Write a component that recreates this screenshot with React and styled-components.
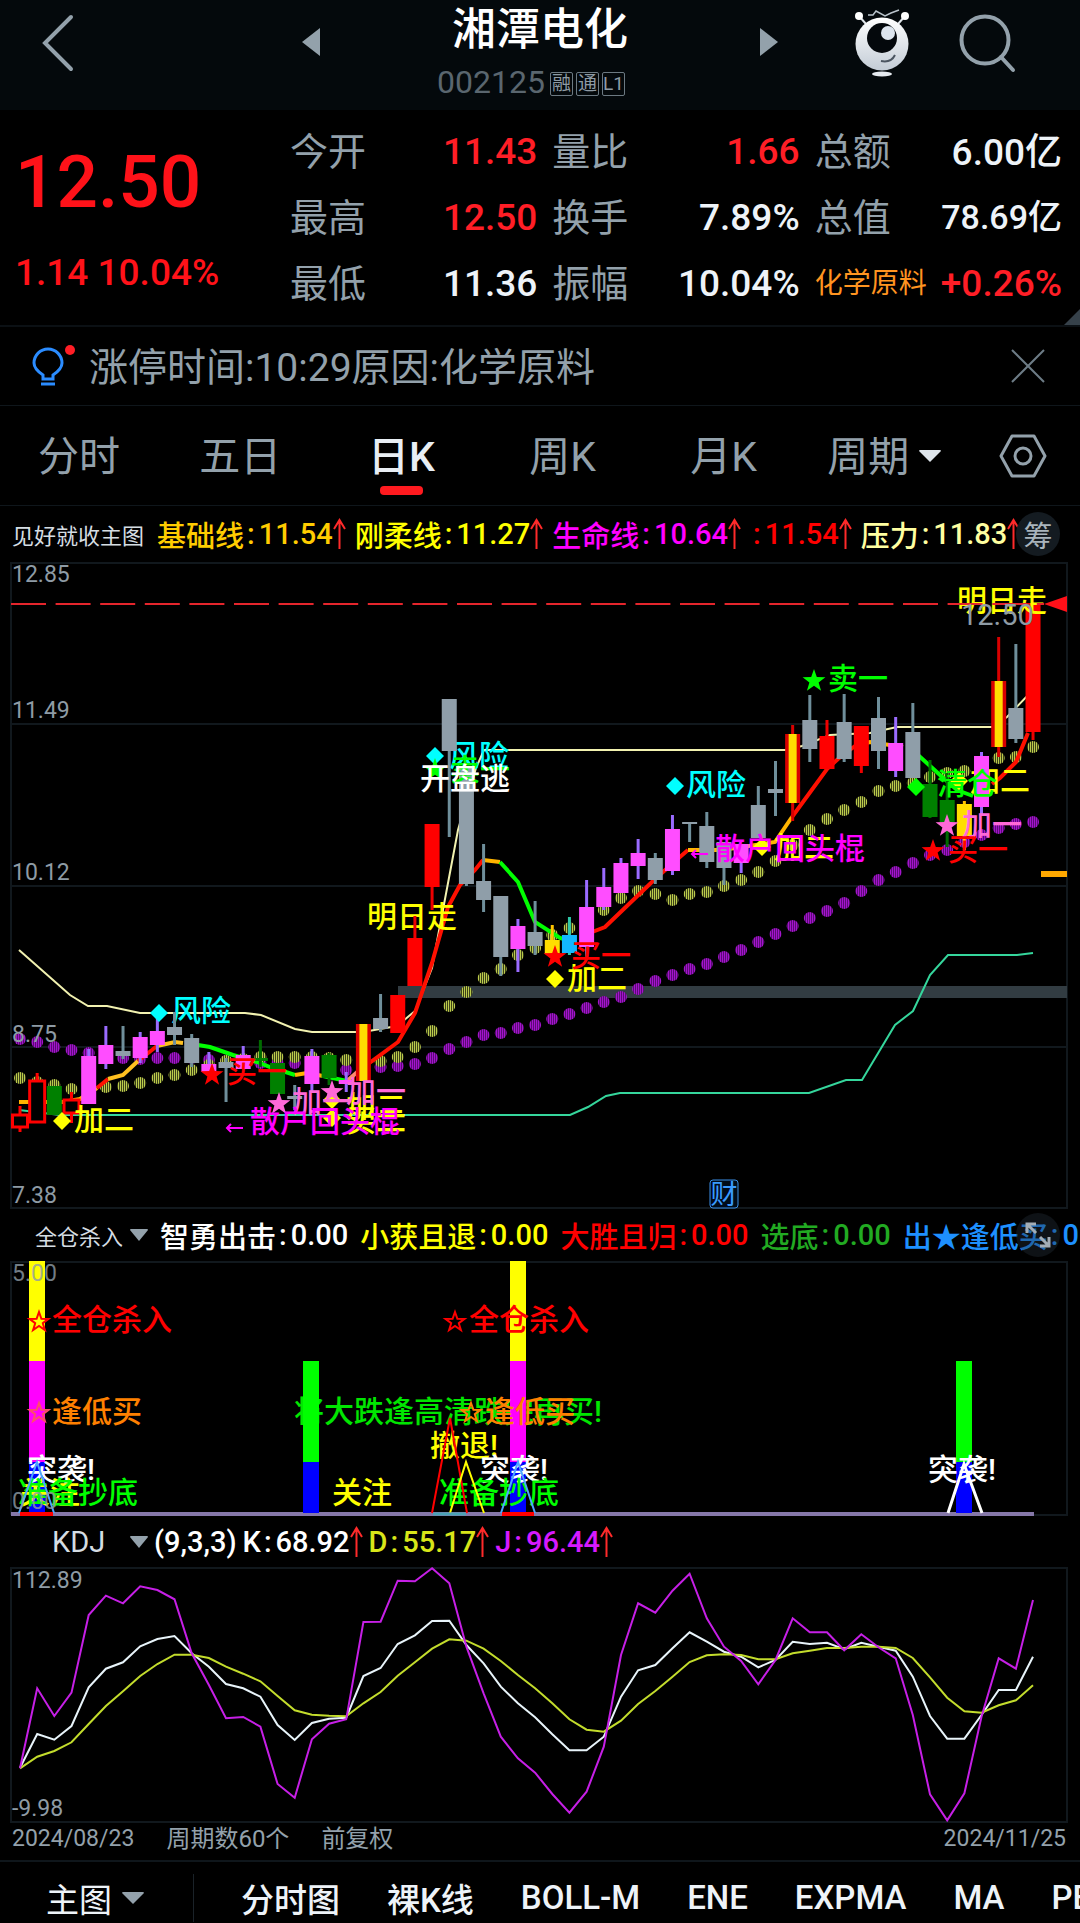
import { useState } from 'react';
import styled, { createGlobalStyle } from 'styled-components';

// 60 trading days share the same x axis in all three charts
const dayX = (i) => 20 + i * 17.17;
const toPoints = (ys, scale = (y) => y) => ys.map((y, i) => `${dayX(i).toFixed(1)},${scale(y).toFixed(1)}`).join(' ');

const COLORS = {
    gray : { body : '#8f9ea9', wick : '#6f8f9b' },
    magenta : { body : '#ff4dff', wick : '#9a6bff' },
    red : { body : '#ff0000', wick : '#ee0000' },
    hollow : { body : '#000', wick : '#ff0000' },
    mixed : { body : '#d90000', wick : '#d90000' },
    green : { body : '#008000', wick : '#006b00' },
    yellow : { body : '#ffdd00', wick : '#ffc400' },
    cyan : { body : '#12b8ff', wick : '#2fc8a8' },
};

// [kind, body top, body bottom, wick top, wick bottom]
const CANDLES = [
    ['hollow', 1115, 1127, 1106, 1132], ['hollow', 1081, 1122, 1073, 1122], ['green', 1086, 1115, 1086, 1115],
    ['hollow', 1100, 1113, 1092, 1123], ['magenta', 1056, 1104, 1049, 1104], ['magenta', 1045, 1064, 1026, 1069],
    ['gray', 1051, 1056, 1026, 1059], ['magenta', 1037, 1058, 1032, 1063], ['magenta', 1031, 1045, 1013, 1052],
    ['gray', 1027, 1035, 1012, 1045], ['gray', 1038, 1063, 1034, 1067], ['magenta', 1064, 1072, 1052, 1072],
    ['gray', 1062, 1068, 1058, 1102], ['magenta', 1055, 1069, 1046, 1069], ['green', 1058, 1061, 1040, 1067],
    ['green', 1063, 1094, 1063, 1094], ['gray', 1096, 1099, 1085, 1110], ['magenta', 1056, 1084, 1049, 1092],
    ['green', 1055, 1078, 1053, 1085], ['magenta', 1080, 1084, 1072, 1092], ['mixed', 1024, 1081, 1024, 1081],
    ['gray', 1018, 1029, 994, 1032], ['red', 995, 1033, 995, 1033], ['red', 938, 986, 916, 986],
    ['red', 824, 887, 824, 910], ['gray', 699, 751, 699, 837], ['gray', 767, 884, 767, 886],
    ['gray', 881, 900, 844, 912], ['gray', 896, 957, 896, 976], ['magenta', 926, 949, 919, 972],
    ['gray', 932, 946, 901, 955], ['yellow', 940, 954, 925, 954], ['cyan', 935, 953, 917, 955],
    ['magenta', 907, 947, 880, 957], ['magenta', 887, 907, 868, 910], ['magenta', 863, 893, 858, 893],
    ['magenta', 853, 866, 839, 879], ['gray', 858, 880, 853, 884], ['magenta', 829, 871, 815, 875],
    ['gray', 822, 824, 822, 842], ['gray', 826, 862, 812, 868], ['gray', 842, 868, 842, 885],
    ['magenta', 844, 863, 844, 873], ['gray', 805, 838, 786, 838], ['gray', 789, 793, 761, 816],
    ['mixed', 734, 803, 725, 821], ['gray', 720, 749, 695, 762], ['red', 736, 769, 720, 769],
    ['gray', 722, 759, 694, 762], ['red', 726, 766, 726, 773], ['gray', 718, 751, 697, 769],
    ['magenta', 743, 771, 717, 777], ['gray', 732, 778, 703, 778], ['green', 784, 817, 760, 818],
    ['green', 800, 822, 773, 847], ['yellow', 804, 836, 801, 850], ['magenta', 756, 807, 752, 815],
    ['mixed', 681, 747, 637, 757], ['gray', 708, 739, 644, 743], ['red', 603, 732, 603, 740],
];

const OLIVE_DOTS = [
    1078, 1082, 1085, 1089, 1088, 1087, 1086, 1083, 1078, 1075, 1070, 1065, 1061, 1059, 1057, 1057, 1057, 1057, 1058, 1060,
    1061, 1061, 1057, 1047, 1031, 1006, 992, 978, 969, 955, 948, 935, 928, 920, 910, 898, 891, 894, 900, 894,
    892, 886, 880, 872, 861, 845, 830, 819, 810, 802, 791, 786, 783, 777, 773, 771, 766, 758, 757, 747,
];

const PURPLE_DOTS = [
    1039, 1042, 1047, 1050, 1053, 1055, 1058, 1059, 1058, 1058, 1058, 1060, 1061, 1062, 1063, 1063, 1063, 1064, 1067, 1070,
    1068, 1067, 1066, 1064, 1058, 1049, 1042, 1035, 1033, 1028, 1025, 1019, 1014, 1008, 1002, 997, 989, 981, 975, 969,
    964, 957, 950, 942, 934, 926, 918, 911, 903, 891, 880, 872, 863, 855, 850, 842, 835, 828, 824, 822,
];

const LIFE_LINE = [
    ['#ffb400', '19,1102 63,1102 80,1099 97,1088'],
    ['#ff1000', '97,1088 108,1079'],
    ['#ffc020', '108,1079 123,1075 138,1061'],
    ['#ff1000', '138,1061 157,1046'],
    ['#ffc020', '157,1046 175,1042 183,1043'],
    ['#00ff00', '198,1045 210,1047 233,1055 257,1062 270,1067 295,1075'],
    ['#ffb400', '295,1075 307,1073 323,1076'],
    ['#00ff00', '323,1076 347,1081'],
    ['#ff8a70', '347,1081 363,1067'],
    ['#ff1000', '363,1067 372,1061 398,1042 415,1013 432,963 448,907 460,885 475,870 483,860'],
    ['#ffb400', '483,860 500,862'],
    ['#00ff00', '500,862 518,882 535,922 560,938 570,941'],
    ['#ff1000', '587,934 605,927 653,881 673,863 688,850'],
    ['#ffb400', '688,850 722,850 775,842 792,817'],
    ['#ff1000', '792,817 827,769 838,759 855,746'],
    ['#ffb400', '855,746 870,742 903,747'],
    ['#00ff00', '918,755 940,775 957,790 973,796'],
    ['#ff1000', '992,784 1000,778 1016,762 1028,733'],
];

const PRESSURE_LINE = '19,950 70,995 88,1006 107,1006 140,1013 245,1013 261,1015 295,1029 312,1032 363,1032 397,1026 415,1011 432,968 458,830 476,768 484,750 785,750 802,746 830,735 870,733 897,727 992,727 1007,717 1033,690';
const SUPPORT_LINE = '19,1110 60,1115 570,1115 588,1107 606,1096 620,1093 809,1093 846,1080 862,1080 895,1025 913,1011 930,975 948,955 1017,955 1033,953';

const J_LINE = [
    655, 415, 498, 428, 195, 137, 160, 109, 120, 148, 310, 405, 505, 501, 530, 702, 743, 568, 521, 508,
    216, 215, 92, 94, 55, 100, 290, 430, 560, 625, 668, 732, 788, 725, 590, 315, 160, 188, 122, 71,
    205, 290, 333, 403, 330, 205, 247, 247, 301, 253, 292, 325, 495, 733, 811, 730, 500, 325, 356, 150,
];
const K_LINE = [
    653, 552, 569, 528, 412, 356, 337, 289, 267, 258, 310, 350, 402, 415, 440, 525, 570, 519, 506, 503,
    378, 354, 282, 256, 213, 212, 285, 340, 410, 460, 502, 553, 601, 601, 560, 440, 361, 345, 295, 247,
    275, 305, 320, 352, 330, 275, 282, 278, 298, 278, 290, 302, 380, 498, 566, 566, 495, 420, 420, 320,
];
const D_LINE = [
    655, 620, 603, 577, 522, 468, 424, 378, 342, 314, 314, 324, 350, 371, 394, 438, 481, 494, 497, 499,
    460, 426, 377, 337, 296, 268, 272, 296, 333, 375, 415, 460, 508, 539, 545, 512, 462, 423, 380, 336,
    316, 313, 315, 328, 328, 310, 302, 294, 294, 290, 290, 294, 324, 382, 443, 484, 488, 466, 451, 406,
];
const kdjY = (v) => 1550 + v / 3;

const STATS = [
    [
        { label : '今开', value : '11.43', color : '#ff1e26' },
        { label : '最高', value : '12.50', color : '#ff1e26' },
        { label : '最低', value : '11.36' },
    ],
    [
        { label : '量比', value : '1.66', color : '#ff1e26' },
        { label : '换手', value : '7.89%' },
        { label : '振幅', value : '10.04%' },
    ],
    [
        { label : '总额', value : '6.00亿', unit : true },
        { label : '总值', value : '78.69亿', unit : true, small : true },
        { label : '化学原料', value : '+0.26%', color : '#ff1e26', sector : true },
    ],
];

const TABS = ['分时', '五日', '日K', '周K', '月K'];
const INDICATORS = ['分时图', '裸K线', 'BOLL-M', 'ENE', 'EXPMA', 'MA', 'PE'];

const MAIN_LEGEND = [
    { name : '基础线', value : '11.54', color : '#ffcc00', up : true },
    { name : '刚柔线', value : '11.27', color : '#ffff00', up : true },
    { name : '生命线', value : '10.64', color : '#ff00ff', up : true },
    { name : '', value : '11.54', color : '#ff0000', up : true },
    { name : '压力', value : '11.83', color : '#ffffa0', up : true },
];

const SIGNAL_LEGEND = [
    { name : '智勇出击', value : '0.00', color : '#ffffff' },
    { name : '小获且退', value : '0.00', color : '#ffff00' },
    { name : '大胜且归', value : '0.00', color : '#ff0000' },
    { name : '选底', value : '0.00', color : '#22aa22' },
    { name : '出★逢低买', value : '0.00', color : '#1e90ff' },
];

const KDJ_LEGEND = [
    { name : 'K', value : '68.92', color : '#ffffff', up : true },
    { name : 'D', value : '55.17', color : '#d8e619', up : true },
    { name : 'J', value : '96.44', color : '#d61aff', up : true },
];

function starPoints(cx, cy, r){
    let points = [];
    for (let i = 0; i < 10; i++){
        const radius = i % 2 === 0 ? r : r * 0.4;
        const angle = Math.PI * i / 5 - Math.PI / 2;
        points.push(`${(cx + radius * Math.cos(angle)).toFixed(1)},${(cy + radius * Math.sin(angle)).toFixed(1)}`);
    }
    return points.join(' ');
}

function Star({ x, y, color, outline }){
    return <polygon points={ starPoints(x, y, outline ? 10 : 12) } fill={ outline ? 'none' : color } stroke={ outline ? color : 'none' } strokeWidth='2' />
}

function Diamond({ x, y, color }){
    return <polygon points={ `${x - 9},${y} ${x},${y - 9} ${x + 9},${y} ${x},${y + 9}` } fill={ color } />
}

function Candle({ index, data }){
    const [kind, top, bottom, high, low] = data;
    const x = dayX(index);
    const color = COLORS[kind];
    return (
        <g>
            <line x1={ x } x2={ x } y1={ high } y2={ low } stroke={ color.wick } strokeWidth='3' />
            <rect
                x={ x - 7.5 } y={ top } width='15' height={ bottom - top } fill={ color.body }
                stroke={ kind === 'hollow' ? '#ff0000' : 'none' } strokeWidth='3'
            />
            { kind === 'mixed' && <rect x={ x - 4 } y={ top } width='8' height={ bottom - top } fill='#ffdd00' /> }
        </g>
    )
}

function LegendItem({ item }){
    return (
        <LegendEntry $color={ item.color }>
            { item.name }<Colon>:</Colon>{ item.value }
            {
                item.up
                ? (
                    <svg width='13' height='32' viewBox='0 0 13 32' fill='none' stroke='#ff2a2a' strokeWidth='2'>
                        <path d='M6.5 31V2M1 11L6.5 2L12 11' />
                    </svg>
                )
                : null
            }
        </LegendEntry>
    )
}

function PriceChart(){
    return (
        <Chart viewBox='0 562 1080 648' role='img' aria-label='日K'>
            <defs>
                <pattern id='oliveStripes' width='2' height='2' patternUnits='userSpaceOnUse'>
                    <rect width='2' height='2' fill='#3c4218' />
                    <rect width='1' height='2' fill='#bccb4c' />
                </pattern>
                <pattern id='purpleStripes' width='2' height='2' patternUnits='userSpaceOnUse'>
                    <rect width='2' height='2' fill='#5c0a78' />
                    <rect width='1' height='2' fill='#a414cc' />
                </pattern>
            </defs>

            <g stroke='#11181d' strokeWidth='2' fill='none'>
                <rect x='11' y='563' width='1056' height='645' />
                <path d='M11 724H1067M11 886H1067M11 1047H1067' />
            </g>
            <rect x='398' y='986' width='669' height='12' fill='#323c42' />

            { PURPLE_DOTS.map((y, i) => <circle key={i} cx={ dayX(i) } cy={ y } r='6' fill='url(#purpleStripes)' />) }
            { OLIVE_DOTS.map((y, i) => <circle key={i} cx={ dayX(i) } cy={ y } r='6' fill='url(#oliveStripes)' />) }

            <polyline points={ PRESSURE_LINE } fill='none' stroke='#f2f2b0' strokeWidth='2' />
            <polyline points={ SUPPORT_LINE } fill='none' stroke='#35d69c' strokeWidth='2' />
            { LIFE_LINE.map(([color, points], i) => <polyline key={i} points={ points } fill='none' stroke={ color } strokeWidth='4' />) }

            <SignalText fill='#ffff00'>
                <text x='367' y='927'>明日走</text>
                <Diamond x={ 762 } y={ 847 } color='#ffff00' />
                <text x='774' y='858'>加二</text>
                <text x='970' y='791'>加二</text>
            </SignalText>
            <SignalText fill='#00ffff'>
                <text x='171' y='1021'>风险</text>
                <text x='449' y='766'>风险</text>
                <text x='686' y='795'>风险</text>
            </SignalText>

            { CANDLES.map((data, i) => <Candle key={i} index={ i } data={ data } />) }

            <SignalText fill='#ffff00'>
                <Diamond x={ 332 } y={ 1100 } color='#ffff00' />
                <text x='346' y='1117'>加二</text>
                <Diamond x={ 332 } y={ 1118 } color='#ffff00' />
                <text x='346' y='1131'>买二</text>
                <Diamond x={ 62 } y={ 1121 } color='#ffff00' />
                <text x='74' y='1130'>加二</text>
                <Diamond x={ 555 } y={ 979 } color='#ffff00' />
                <text x='567' y='989'>加二</text>
                <Diamond x={ 959 } y={ 781 } color='#ffff00' />
                <text x='957' y='611'>明日走</text>
            </SignalText>
            <Diamond x={ 159 } y={ 1013 } color='#00ffff' />
            <Diamond x={ 435 } y={ 756 } color='#00ffff' />
            <Diamond x={ 675 } y={ 786 } color='#00ffff' />
            <SignalText fill='#00ff00'>
                <Star x={ 435 } y={ 770 } color='#00ff00' />
                <text x='450' y='780'>卖一</text>
                <Star x={ 814 } y={ 681 } color='#00ff00' />
                <text x='828' y='689'>卖一</text>
                <Diamond x={ 916 } y={ 787 } color='#00ff00' />
                <text x='937' y='794'>清仓</text>
            </SignalText>
            <SignalText fill='#ff69d8'>
                <Star x={ 279 } y={ 1104 } color='#ff69d8' />
                <text x='292' y='1112'>加一</text>
                <Star x={ 332 } y={ 1092 } color='#ff69d8' />
                <text x='346' y='1102'>加一</text>
                <Star x={ 947 } y={ 826 } color='#ff69d8' />
                <text x='962' y='835'>加一</text>
            </SignalText>
            <SignalText fill='#ff0000'>
                <Star x={ 212 } y={ 1075 } color='#ff0000' />
                <text x='227' y='1082'>买一</text>
                <Star x={ 555 } y={ 957 } color='#ff0000' />
                <text x='571' y='966'>买一</text>
                <Star x={ 933 } y={ 851 } color='#ff0000' />
                <text x='948' y='860'>买一</text>
            </SignalText>
            <SignalText fill='#ff00ff'>
                <path d='M243 1128H227M231 1124L227 1128L231 1132' stroke='#ff00ff' strokeWidth='2' fill='none' />
                <text x='250' y='1132'>散户回头棍</text>
                <path d='M708 854H692M696 850L692 854L696 858' stroke='#ff00ff' strokeWidth='2' fill='none' />
                <text x='715' y='859'>散户回头棍</text>
            </SignalText>
            <SignalText fill='#ffffff'>
                <text x='420' y='789'>开盘逃</text>
            </SignalText>

            <line x1='11' x2='1044' y1='604' y2='604' stroke='#e5252c' strokeWidth='2' strokeDasharray='35 9.6' />
            <polygon points='1044,604 1067,596 1067,612' fill='#ff1019' />
            <rect x='1041' y='871' width='26' height='6' fill='#ffa800' />

            <AxisText>
                <text x='12' y='582'>12.85</text>
                <text x='12' y='718'>11.49</text>
                <text x='12' y='880'>10.12</text>
                <text x='12' y='1042'>8.75</text>
                <text x='12' y='1203'>7.38</text>
            </AxisText>
            <PriceTag x='961' y='625'>12.50</PriceTag>

            <rect x='710' y='1180' width='28' height='28' rx='3' fill='#000c1a' stroke='#3a8fe6' strokeWidth='1' />
            <ReportMark x='724' y='1204'>财</ReportMark>
        </Chart>
    )
}

function SignalChart(){
    return (
        <Chart viewBox='0 1260 1080 257' role='img' aria-label='全仓杀入'>
            <path d='M11 1515V1262H1067V1515H11' stroke='#11181d' strokeWidth='2' fill='none' />

            <SignalText fill='#00e600'>
                <text x='294' y='1422'>将大跌逢高清跌完再买!</text>
            </SignalText>

            <path d='M11 1514H1034' stroke='#8577a8' strokeWidth='4' />
            {
                [29, 510].map((x)=>{
                    return (
                        <g key={x}>
                            <rect x={ x } y='1261' width='16' height='100' fill='#ffff00' />
                            <rect x={ x } y='1361' width='16' height='101' fill='#ff00ff' />
                            <rect x={ x } y='1462' width='16' height='51' fill='#0000ff' />
                        </g>
                    )
                })
            }
            {
                [303, 956].map((x)=>{
                    return (
                        <g key={x}>
                            <rect x={ x } y='1361' width='16' height='101' fill='#00ff00' />
                            <rect x={ x } y='1462' width='16' height='51' fill='#0000ff' />
                        </g>
                    )
                })
            }

            <SignalText fill='#ffff00'>
                <text x='20' y='1503'>关注</text>
                <text x='332' y='1503'>关注</text>
                <text x='430' y='1456'>撤退!</text>
            </SignalText>
            <SignalText fill='#ff0000'>
                <Star x={ 39 } y={ 1322 } color='#ff0000' outline />
                <text x='52' y='1330'>全仓杀入</text>
                <Star x={ 455 } y={ 1322 } color='#ff0000' outline />
                <text x='469' y='1330'>全仓杀入</text>
            </SignalText>
            <SignalText fill='#ff8000'>
                <Star x={ 39 } y={ 1413 } color='#ff4d6a' outline />
                <text x='52' y='1422'>逢低买</text>
                <Star x={ 471 } y={ 1413 } color='#ff8000' outline />
                <text x='485' y='1422'>逢低买</text>
            </SignalText>
            <SignalText fill='#ffffff'>
                <text x='27' y='1480'>突袭!</text>
                <text x='480' y='1480'>突袭!</text>
                <text x='928' y='1480'>突袭!</text>
            </SignalText>
            <SignalText fill='#00ff00'>
                <text x='18' y='1503'>准备抄底</text>
                <text x='439' y='1503'>准备抄底</text>
            </SignalText>

            <g fill='none' strokeWidth='2'>
                <path d='M432 1513L450 1418L467 1513' stroke='#ff0000' />
                <path d='M450 1513L466 1462L484 1513' stroke='#ffff00' />
                <path d='M19 1513L37 1462L54 1513M501 1513L518 1462L535 1513' stroke='#4da6ff' />
                <path d='M948 1513L964 1464L982 1513' stroke='#ffffff' strokeWidth='3' />
                <path d='M20 1514H53M502 1514H534' stroke='#ff0000' strokeWidth='4' />
                <path d='M433 1514H466' stroke='#4aa3b5' strokeWidth='3' />
            </g>

            <AxisText opacity='0.8'>
                <text x='12' y='1281'>5.00</text>
                <text x='12' y='1509'>0.00</text>
            </AxisText>
        </Chart>
    )
}

function KdjChart(){
    return (
        <Chart viewBox='0 1567 1080 256' role='img' aria-label='KDJ'>
            <rect x='11' y='1568' width='1056' height='254' stroke='#11181d' strokeWidth='2' fill='none' />
            <AxisText>
                <text x='12' y='1588'>112.89</text>
                <text x='12' y='1816'>-9.98</text>
            </AxisText>
            <g fill='none' strokeWidth='2'>
                <polyline points={ toPoints(K_LINE, kdjY) } stroke='#e8f4fa' />
                <polyline points={ toPoints(D_LINE, kdjY) } stroke='#c3dc2c' />
                <polyline points={ toPoints(J_LINE, kdjY) } stroke='#c61fe6' />
            </g>
        </Chart>
    )
}

function Caret({ width = 18 }){
    return <svg width={ width } height='12' viewBox='0 0 18 12' preserveAspectRatio='none'><path d='M0 1Q0 0 1 0H17Q18 0 18 1L9 12Z' fill='currentColor' /></svg>
}

function App(){

    const [tab, setTab] = useState('日K');
    const [noticeOpen, setNoticeOpen] = useState(true);

    return(
        <Page>
            <GlobalStyle />

            <Header>
                <IconBtn aria-label='返回'>
                    <svg width='32' height='60' viewBox='0 0 32 60' fill='none' stroke='#93a1ab' strokeWidth='4' strokeLinecap='round'>
                        <path d='M29 5L3 31L29 57' />
                    </svg>
                </IconBtn>
                <TitleArea>
                    <IconBtn aria-label='上一只'>
                        <svg width='18' height='28' viewBox='0 0 18 28'><path d='M18 0V28L0 14Z' fill='#93a1ab' /></svg>
                    </IconBtn>
                    <TitleBlock>
                        <StockName>湘潭电化</StockName>
                        <CodeRow>
                            <Code>002125</Code>
                            <Badge>融</Badge>
                            <Badge>通</Badge>
                            <Badge>L1</Badge>
                        </CodeRow>
                    </TitleBlock>
                    <IconBtn aria-label='下一只'>
                        <svg width='18' height='28' viewBox='0 0 18 28'><path d='M0 0V28L18 14Z' fill='#93a1ab' /></svg>
                    </IconBtn>
                </TitleArea>
                <HeaderTools>
                    <IconBtn aria-label='助手'>
                        <svg width='54' height='70' viewBox='0 0 54 70'>
                            <defs>
                                <linearGradient id='robot' x1='0' y1='0' x2='0' y2='1'>
                                    <stop offset='0' stopColor='#ffffff' />
                                    <stop offset='1' stopColor='#c3ccd6' />
                                </linearGradient>
                            </defs>
                            <path d='M4 7L11 15M50 7L43 15' stroke='#dfe5ea' strokeWidth='2' />
                            <circle cx='4' cy='7' r='4' fill='#fff' />
                            <circle cx='50' cy='7' r='4' fill='#fff' />
                            <path d='M13 6H18L21 2L30 7L36 4L44 1' stroke='#b9c3cb' strokeWidth='1.5' fill='none' />
                            <circle cx='27' cy='35' r='26.5' fill='url(#robot)' />
                            <circle cx='27' cy='29' r='15' fill='#04080c' />
                            <circle cx='33' cy='24' r='7' fill='#dde5ee' />
                            <path d='M26 52Q36 54 40 46' stroke='#4b5561' strokeWidth='2' fill='none' />
                            <ellipse cx='27' cy='65' rx='10' ry='2.5' fill='#e6ebf0' />
                        </svg>
                    </IconBtn>
                    <IconBtn aria-label='搜索'>
                        <svg width='58' height='60' viewBox='0 0 58 60' fill='none' stroke='#93a1ab' strokeWidth='4' strokeLinecap='round'>
                            <circle cx='26' cy='26' r='23.5' />
                            <path d='M42 43L54 56' />
                        </svg>
                    </IconBtn>
                </HeaderTools>
            </Header>

            <Quote>
                <PriceBlock>
                    <Price>12.50</Price>
                    <Change>1.14 10.04%</Change>
                </PriceBlock>
                {
                    STATS.map((column, i)=>{
                        return (
                            <StatColumn key={i}>
                                {
                                    column.map((stat)=>{
                                        return (
                                            <Stat key={stat.label}>
                                                <StatLabel $sector={ stat.sector }>{ stat.label }</StatLabel>
                                                <StatValue $color={ stat.color } $unit={ stat.unit } $small={ stat.small }>{ stat.value }</StatValue>
                                            </Stat>
                                        )
                                    })
                                }
                            </StatColumn>
                        )
                    })
                }
                <Corner />
            </Quote>

            {
                noticeOpen && (
                    <Notice>
                        <svg width='48' height='46' viewBox='0 0 48 46' fill='none' stroke='#2b8cff' strokeWidth='3'>
                            <path d='M12 36V32C6 28 3 24 3 20A14 14 0 0 1 31 20C31 24 28 28 22 32V36Z' />
                            <path d='M10 41H24' />
                            <circle cx='39' cy='7' r='5' fill='#ff1e26' stroke='none' />
                        </svg>
                        <NoticeText>涨停时间:10:29原因:化学原料</NoticeText>
                        <IconBtn aria-label='关闭' onClick={ () => setNoticeOpen(false) }>
                            <svg width='34' height='34' viewBox='0 0 34 34' stroke='#6d7c86' strokeWidth='2'>
                                <path d='M1 1L33 33M33 1L1 33' />
                            </svg>
                        </IconBtn>
                    </Notice>
                )
            }

            <Tabs>
                { TABS.map((name) => <Tab key={name} $active={ name === tab } onClick={ () => setTab(name) }>{ name }</Tab>) }
                <Tab>周期<CaretLight><Caret width={ 22 } /></CaretLight></Tab>
                <SettingsBtn aria-label='设置'>
                    <svg width='48' height='44' viewBox='0 0 48 44' fill='none' stroke='#93a1ab' strokeWidth='3'>
                        <path d='M13 2H35L46 22L35 42H13L2 22Z' strokeLinejoin='round' />
                        <circle cx='24' cy='22' r='8' />
                    </svg>
                </SettingsBtn>
            </Tabs>

            <Legend $height={ 56 } $gap={ 9 }>
                <LegendTitle $pad={ 12 }>见好就收主图</LegendTitle>
                { MAIN_LEGEND.map((item, i) => <LegendItem key={i} item={ item } />) }
                <RoundBtn>筹</RoundBtn>
            </Legend>
            <PriceChart />

            <Legend $height={ 50 } $gap={ 12 }>
                <LegendTitle $pad={ 35 }>全仓杀入<Caret /></LegendTitle>
                { SIGNAL_LEGEND.map((item, i) => <LegendItem key={i} item={ item } />) }
                <RoundBtn $clear aria-label='全屏'>
                    <svg width='26' height='26' viewBox='0 0 26 26' fill='none' stroke='#a3adb5' strokeWidth='3'>
                        <path d='M2 11V2H11M2 2L11 11M24 15V24H15M24 24L15 15' />
                    </svg>
                </RoundBtn>
            </Legend>
            <SignalChart />

            <Legend $height={ 50 } $gap={ 6 }>
                <LegendTitle $pad={ 52 } $large>KDJ<Caret /></LegendTitle>
                <LegendEntry $color='#ffffff'>(9,3,3)</LegendEntry>
                { KDJ_LEGEND.map((item, i) => <LegendItem key={i} item={ item } />) }
            </Legend>
            <KdjChart />

            <DateRow>
                <span>2024/08/23</span>
                <DateNote>周期数60个</DateNote>
                <DateNote>前复权</DateNote>
                <LastDate>2024/11/25</LastDate>
            </DateRow>

            <BottomBar>
                <MainSelect>主图<Caret width={ 22 } /></MainSelect>
                { INDICATORS.map((name) => <IndicatorBtn key={name}>{ name }</IndicatorBtn>) }
            </BottomBar>
        </Page>
    )
}

export default App

const GlobalStyle = createGlobalStyle`
    body {
        margin : 0;
        background-color : #000;
        font-family : Roboto, "Noto Sans CJK SC", sans-serif;
    }
    button {
        padding : 0;
        border : none;
        background : none;
        color : inherit;
        font : inherit;
        white-space : nowrap;
    }
    svg {
        flex-shrink : 0;
    }
`

const Page = styled.div`
    width : 100%;
    overflow : hidden;
    background-color : #000;
    color : #93a1ab;
`

const Header = styled.header`
    display : grid;
    grid-template-columns : 1fr 476px 1fr;
    height : 110px;
    background-color : #04090c;

    > button {
        justify-self : start;
        align-self : start;
        margin : 12px 0 0 42px;
    }
`

const IconBtn = styled.button`
    display : flex;
`

const TitleArea = styled.div`
    display : flex;
    justify-content : space-between;

    > button {
        align-self : flex-start;
        margin-top : 28px;
    }
`

const TitleBlock = styled.div`
    display : flex;
    flex-direction : column;
    align-items : center;
`

const StockName = styled.h1`
    margin : 0;
    padding-top : 3px;
    color : #fff;
    font-size : 44px;
    font-weight : 500;
    line-height : 54px;
`

const CodeRow = styled.div`
    display : flex;
    align-items : center;
    gap : 3px;
    height : 50px;
    padding-right : 18px;
`

const Code = styled.span`
    margin-right : 2px;
    color : #5a666f;
    font-size : 32px;
`

const Badge = styled.span`
    box-sizing : border-box;
    width : 23px;
    height : 24px;
    margin-top : 4px;
    border : 1px solid #6c7982;
    border-radius : 2px;
    color : #8e9ba5;
    font-size : 19px;
    line-height : 21px;
    text-align : center;
`

const HeaderTools = styled.div`
    display : flex;
    align-items : flex-start;
    gap : 50px;
    padding : 9px 0 0 77px;

    > button + button {
        margin-top : 5px;
    }
`

const Quote = styled.section`
    position : relative;
    display : grid;
    grid-template-columns : 260px repeat(3, minmax(0, 1fr));
    column-gap : 15px;
    padding : 8px 18px 9px 15px;
    border-bottom : 2px solid #0b1014;
`

const PriceBlock = styled.div`
    padding-top : 22px;
    color : #ff1219;
    font-weight : 500;
`

const Price = styled.div`
    font-size : 73px;
    line-height : 84px;
`

const Change = styled.div`
    margin-top : 24px;
    font-size : 37px;
    line-height : 50px;
`

const StatColumn = styled.div`
    display : flex;
    flex-direction : column;
`

const Stat = styled.div`
    display : flex;
    justify-content : space-between;
    align-items : center;
    height : 66px;
    white-space : nowrap;
`

const StatLabel = styled.span`
    padding-bottom : 5px;
    color : ${(props) => props.$sector ? '#ff9420' : '#93a1ab'};
    font-size : ${(props) => props.$sector ? '28px' : '38px'};
`

const StatValue = styled.span`
    padding-bottom : ${(props) => props.$unit ? '5px' : '0'};
    color : ${(props) => props.$color || '#eef3f8'};
    font-size : ${(props) => props.$small ? '34px' : '37px'};
    font-weight : 500;
`

const Corner = styled.span`
    position : absolute;
    right : 0;
    bottom : 0;
    border-left : 16px solid transparent;
    border-bottom : 16px solid #36414a;
`

const Notice = styled.section`
    display : flex;
    align-items : center;
    height : 78px;
    padding : 0 35px 0 31px;
    border-bottom : 1px solid #0f161b;
`

const NoticeText = styled.span`
    flex : 1;
    margin-left : 10px;
    padding-bottom : 5px;
    font-size : 39px;
`

const Tabs = styled.nav`
    display : grid;
    grid-template-columns : repeat(5, 161fr) 160fr 114fr;
    height : 99px;
    border-bottom : 1px solid #0f161b;
`

const Tab = styled.button`
    position : relative;
    display : flex;
    justify-content : center;
    align-items : center;
    padding : 0 3px 6px 0;
    color : ${(props) => props.$active ? '#e8eef4' : '#93a1ab'};
    font-size : 41px;
    font-weight : ${(props) => props.$active ? 500 : 400};

    &::after {
        content : '';
        display : ${(props) => props.$active ? 'block' : 'none'};
        position : absolute;
        bottom : 10px;
        width : 43px;
        height : 9px;
        border-radius : 4px;
        background-color : #ff1a1f;
    }
`

const SettingsBtn = styled.button`
    display : flex;
    justify-content : center;
    align-items : center;
`

const CaretLight = styled.span`
    display : flex;
    margin : 6px 0 0 10px;
    color : #dfe6ec;
`

const Legend = styled.div`
    position : relative;
    display : flex;
    align-items : center;
    gap : ${(props) => props.$gap}px;
    height : ${(props) => props.$height}px;
    overflow : hidden;
    white-space : nowrap;
`

const LegendTitle = styled.button`
    box-sizing : border-box;
    display : flex;
    flex-shrink : 0;
    justify-content : space-between;
    align-items : center;
    width : 148px;
    padding-left : ${(props) => props.$pad}px;
    color : #d5dde3;
    font-size : ${(props) => props.$large ? '29px' : '22px'};

    svg {
        color : #93a1ab;
    }
`

const LegendEntry = styled.span`
    display : flex;
    align-items : center;
    color : ${(props) => props.$color};
    font-size : 29px;
    font-weight : 500;
`

const Colon = styled.span`
    margin : 0 4px 0 3px;
`

const RoundBtn = styled.button`
    position : absolute;
    right : 20px;
    display : flex;
    justify-content : center;
    align-items : center;
    width : 44px;
    height : 44px;
    border-radius : 50%;
    background-color : ${(props) => props.$clear ? 'rgba(36, 46, 54, 0.4)' : '#141b21'};
    color : #a9b4bc;
    font-size : 29px;
`

const Chart = styled.svg`
    display : block;
    width : 100%;
`

const SignalText = styled.g`
    font-size : 30px;
    font-weight : 500;
`

const AxisText = styled.g`
    fill : #8e9ba5;
    font-size : 23px;
`

const PriceTag = styled.text`
    fill : #8e9ba5;
    font-size : 29px;
`

const ReportMark = styled.text`
    fill : #3a9bff;
    font-size : 27px;
    text-anchor : middle;
`

const DateRow = styled.div`
    display : flex;
    align-items : center;
    gap : 32px;
    box-sizing : border-box;
    height : 37px;
    padding : 0 14px 6px 12px;
    font-size : 23px;
    line-height : 30px;
`

const DateNote = styled.span`
    font-size : 24px;
`

const LastDate = styled.span`
    margin-left : auto;
`

const BottomBar = styled.nav`
    display : flex;
    align-items : center;
    gap : 47px;
    height : 63px;
    padding-top : 10px;
    box-sizing : border-box;
    border-top : 2px solid #0f161b;
    color : #eef3f8;
    font-size : 33px;
`

const MainSelect = styled.button`
    display : flex;
    flex-shrink : 0;
    align-items : center;
    gap : 10px;
    box-sizing : border-box;
    width : 194px;
    padding-left : 46px;
    border-right : 1px solid #1a2228;

    svg {
        color : #93a1ab;
    }
`

const IndicatorBtn = styled.button`
    flex-shrink : 0;
    font-weight : 500;
`
